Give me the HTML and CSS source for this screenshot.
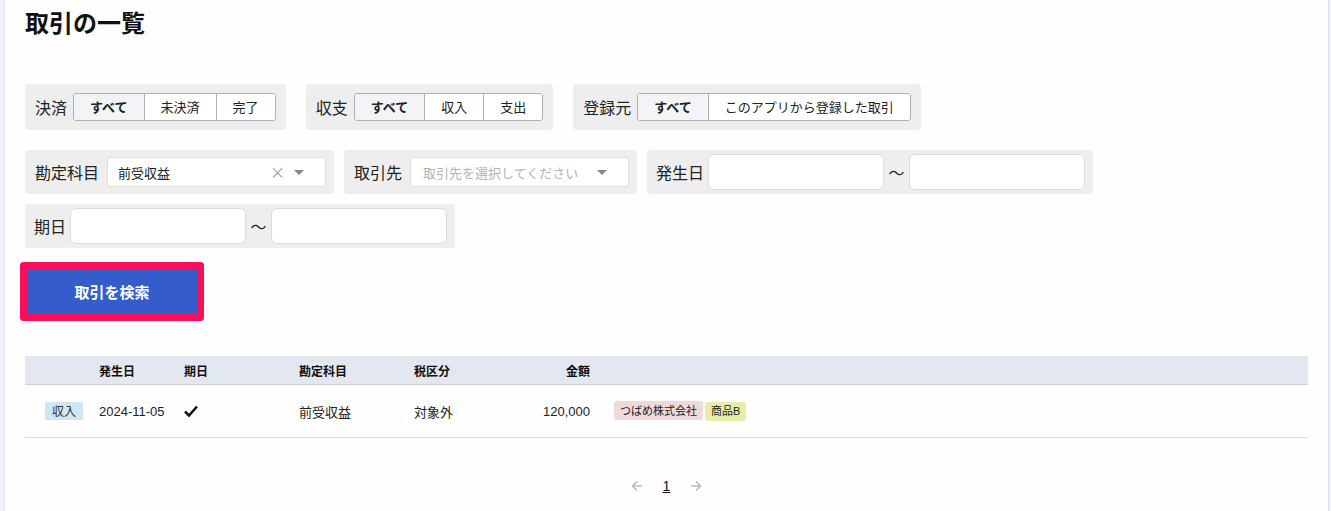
FILE: index.html
```html
<!DOCTYPE html>
<html lang="ja">
<head>
    <meta charset="UTF-8">
    <meta name="viewport" content="width=device-width, initial-scale=1.0">
    <title>取引の一覧</title>
    <link rel="stylesheet" href="styles.css">
</head>
<body>
    <main class="panel">
        <h1 class="page-title">取引の一覧</h1>

        <!-- toggle filters -->
        <div class="filter-row toggles">
            <div class="filter-group">
                <span class="filter-label">決済</span>
                <div class="btn-group">
                    <button class="seg active">すべて</button>
                    <button class="seg">未決済</button>
                    <button class="seg">完了</button>
                </div>
            </div>
            <div class="filter-group">
                <span class="filter-label">収支</span>
                <div class="btn-group">
                    <button class="seg active">すべて</button>
                    <button class="seg">収入</button>
                    <button class="seg">支出</button>
                </div>
            </div>
            <div class="filter-group">
                <span class="filter-label">登録元</span>
                <div class="btn-group">
                    <button class="seg active">すべて</button>
                    <button class="seg">このアプリから登録した取引</button>
                </div>
            </div>
        </div>

        <!-- select / date filters -->
        <div class="filter-row fields">
            <div class="filter-group select-group">
                <span class="filter-label">勘定科目</span>
                <div class="select">
                    <span class="select-value">前受収益</span>
                    <span class="select-clear">×</span>
                    <span class="select-caret"></span>
                </div>
            </div>
            <div class="filter-group select-group">
                <span class="filter-label">取引先</span>
                <div class="select">
                    <span class="select-value placeholder">取引先を選択してください</span>
                    <span class="select-caret"></span>
                </div>
            </div>
            <div class="filter-group date-group">
                <span class="filter-label">発生日</span>
                <input type="text" class="date-input">
                <span class="tilde">〜</span>
                <input type="text" class="date-input">
            </div>
            <div class="filter-group date-group">
                <span class="filter-label">期日</span>
                <input type="text" class="date-input">
                <span class="tilde">〜</span>
                <input type="text" class="date-input">
            </div>
        </div>

        <button class="search-btn">取引を検索</button>

        <table class="deals">
            <colgroup>
                <col style="width: 74px">
                <col style="width: 85px">
                <col style="width: 115px">
                <col style="width: 115px">
                <col style="width: 96px">
                <col style="width: 80px">
                <col>
            </colgroup>
            <thead>
                <tr>
                    <th></th>
                    <th>発生日</th>
                    <th>期日</th>
                    <th>勘定科目</th>
                    <th>税区分</th>
                    <th class="num">金額</th>
                    <th></th>
                </tr>
            </thead>
            <tbody>
                <tr>
                    <td class="type-cell"><span class="badge income">収入</span></td>
                    <td>2024-11-05</td>
                    <td>
                        <svg class="check" width="14" height="12" viewBox="0 0 14 12">
                            <path d="M1 6.5 L5 10.5 L13 1.5" fill="none" stroke="#111" stroke-width="2.6" stroke-linejoin="miter"/>
                        </svg>
                    </td>
                    <td>前受収益</td>
                    <td>対象外</td>
                    <td class="num">120,000</td>
                    <td class="tags-cell">
                        <span class="tag partner">つばめ株式会社</span><span class="tag item">商品B</span>
                    </td>
                </tr>
            </tbody>
        </table>

        <nav class="pager">
            <svg width="12" height="12" viewBox="0 0 12 12">
                <path d="M11 6 H1.5 M6 1.5 L1.5 6 L6 10.5" fill="none" stroke="#bbb" stroke-width="1.6"/>
            </svg>
            <span class="page current">1</span>
            <svg width="12" height="12" viewBox="0 0 12 12">
                <path d="M1 6 H10.5 M6 1.5 L10.5 6 L6 10.5" fill="none" stroke="#bbb" stroke-width="1.6"/>
            </svg>
        </nav>
    </main>
</body>
</html>
```

FILE: styles.css
```css
body {
    margin: 0;
    background-color: #ecf1fb;
    font-family: "Liberation Sans", "Noto Sans CJK JP", sans-serif;
    color: #222;
    height: 511px;
    overflow: hidden;
}

.panel {
    display: flow-root;
    margin-left: 4px;
    width: 1283px;
    height: 506px;
    padding: 5px 20px 0 20px;
    background-color: #fefefe;
    border-left: 1px solid #e3e8f2;
    border-right: 1px solid #dde2ee;
    box-sizing: content-box;
}

.page-title {
    margin: 0;
    font-size: 24px;
    line-height: 34px;
    font-weight: 700;
    font-family: "Noto Sans CJK JP", sans-serif;
    color: #111;
}

/* filter rows */
.filter-row {
    display: flex;
    flex-wrap: wrap;
}

.toggles {
    gap: 20px;
    margin-top: 45px;
}

.fields {
    gap: 10px;
    margin-top: 20px;
}

.filter-group {
    display: flex;
    align-items: center;
    background-color: #eeeeee;
    border-radius: 4px;
    padding: 9px 10px;
}

.filter-label {
    font-family: "Noto Sans CJK JP", sans-serif;
    font-size: 16px;
    line-height: 20px;
    color: #222;
    margin-right: 6px;
}

.btn-group {
    display: flex;
    height: 28px;
    border: 1px solid #b0b0b0;
    border-radius: 3px;
    background: #fff;
    box-sizing: border-box;
    overflow: hidden;
}

.seg {
    font-family: "Noto Sans CJK JP", sans-serif;
    font-size: 13px;
    color: #222;
    background: #fff;
    border: none;
    border-left: 1px solid #b0b0b0;
    padding: 0 16px;
    height: 26px;
    line-height: 26px;
}

.seg:first-child {
    border-left: none;
}

.seg.active {
    background: #f3f4f8;
    font-weight: 700;
}

/* selects */
.select-group {
    padding: 7px 8px 7px 10px;
}

.select-group .filter-label {
    margin-right: 8px;
}

.select {
    position: relative;
    display: flex;
    align-items: center;
    width: 219px;
    height: 30px;
    box-sizing: border-box;
    background: #fff;
    border: 1px solid #e2ddd6;
    border-radius: 4px;
    padding-left: 10px;
    font-family: "Noto Sans CJK JP", sans-serif;
    font-size: 13px;
}

.select-value.placeholder {
    color: #b3b3b3;
    padding-left: 2px;
}

.select-clear {
    position: absolute;
    right: 40px;
    top: 5px;
    color: #999;
    font-size: 15px;
    line-height: 18px;
}

.select-caret {
    position: absolute;
    right: 21px;
    top: 12px;
    width: 0;
    height: 0;
    border-left: 5px solid transparent;
    border-right: 5px solid transparent;
    border-top: 5px solid #888;
}

/* dates */
.date-group {
    padding: 4px 8px 4px 9px;
}

.date-group .filter-label {
    margin-right: 4px;
}

.date-input {
    width: 176px;
    height: 36px;
    box-sizing: border-box;
    border: 1px solid #dcdcdc;
    border-radius: 6px;
    background: #fff;
    padding: 0 8px;
}

.tilde {
    width: 25px;
    text-align: center;
    font-size: 16px;
    font-family: "Noto Sans CJK JP", sans-serif;
    color: #222;
}

/* search button */
.search-btn {
    display: block;
    margin: 21px 0 0 2px;
    width: 170px;
    height: 45px;
    border: none;
    border-radius: 1px;
    background-color: #345dcb;
    color: #fff;
    font-family: "Noto Sans CJK JP", sans-serif;
    font-size: 15px;
    font-weight: 700;
    box-shadow: 0 0 0 7px #fb0e5b;
}

/* table */
.deals {
    margin-top: 42px;
    width: 1283px;
    border-collapse: collapse;
    table-layout: fixed;
    font-size: 13px;
}

.deals th {
    height: 28px;
    padding: 0;
    background-color: #e3e7ef;
    border-bottom: 1px solid #ccd0d8;
    text-align: left;
    font-family: "Noto Sans CJK JP", sans-serif;
    font-size: 12px;
    font-weight: 700;
    color: #111;
}

.deals td {
    height: 52px;
    padding: 0;
    border-bottom: 1px solid #d8d8dc;
    font-family: "Liberation Sans", "Noto Sans CJK JP", sans-serif;
    font-size: 13px;
    color: #222;
}

.deals .num {
    text-align: right;
}

.type-cell {
    padding-left: 20px !important;
}

.badge {
    display: inline-block;
    font-family: "Noto Sans CJK JP", sans-serif;
    font-size: 12px;
    line-height: 18px;
    padding: 0 7px;
    border-radius: 2px;
}

.badge.income {
    background-color: #d0e6f4;
    color: #333;
}

.check {
    display: block;
}

.tags-cell {
    padding-left: 24px !important;
}

.tag {
    display: inline-block;
    font-family: "Noto Sans CJK JP", sans-serif;
    font-size: 11px;
    line-height: 19px;
    padding: 0 6px;
    border-radius: 3px;
    margin-right: 2px;
    color: #222;
}

.tag.partner {
    background-color: #f0d9d9;
}

.tag.item {
    background-color: #e8eeaa;
    font-family: "Liberation Sans", "Noto Sans CJK JP", sans-serif;
}

/* pagination */
.pager {
    display: flex;
    justify-content: center;
    align-items: center;
    gap: 20px;
    margin-top: 40px;
}

.page {
    font-size: 14px;
    color: #111;
}

.page.current {
    text-decoration: underline;
}
```
